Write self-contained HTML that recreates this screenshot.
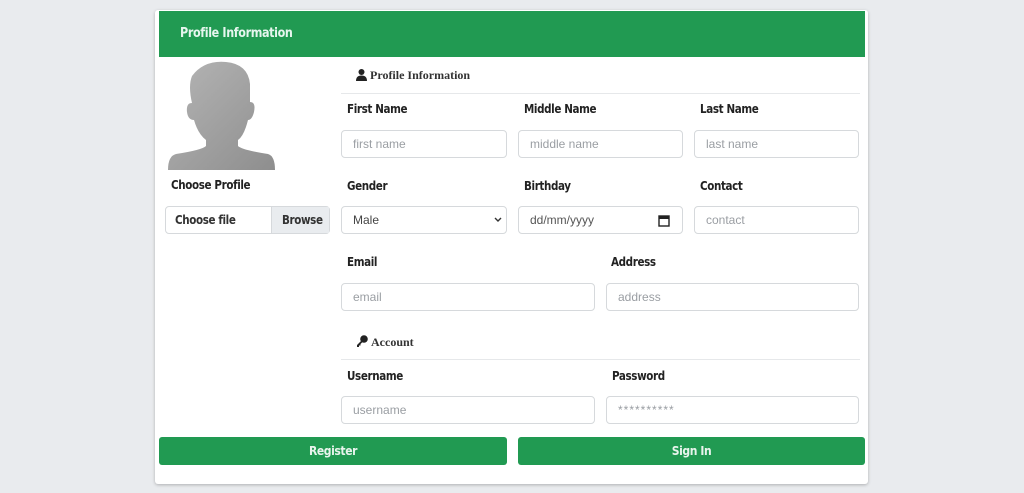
<!DOCTYPE html>
<html><head><meta charset="utf-8"><style>
*{box-sizing:border-box;margin:0;padding:0}
body{width:1024px;height:493px;background:#e9ebee;position:relative;overflow:hidden;font-family:"Liberation Sans",sans-serif}
.card{position:absolute;left:155px;top:10px;width:713px;height:474px;background:#fff;border-radius:3px;box-shadow:0 1px 3px rgba(0,0,0,.25)}
.hd{position:absolute;left:159px;top:11px;width:706px;height:46px;background:#219a52}
.b{position:absolute;font-family:"DejaVu Sans Condensed","Liberation Sans",sans-serif;font-weight:bold;font-size:12.5px;color:#222;letter-spacing:-0.4px;line-height:14px;transform-origin:0 0;transform:scaleX(.92)}
.in{position:absolute;height:28px;border:1px solid #d6d9dc;border-radius:4px;background:#fff;font-size:12px;color:#9a9ea3;padding-left:11px;line-height:26px}
.sec{position:absolute;font-family:"Liberation Serif",serif;font-weight:bold;font-size:12px;color:#333}
.line{position:absolute;height:1px;background:#e6e8ea;left:341px;width:519px}
.btn{position:absolute;top:437px;height:28px;background:#219a52;border-radius:3px;text-align:center;line-height:28px;font-family:"DejaVu Sans Condensed","Liberation Sans",sans-serif;font-weight:bold;font-size:12px;color:#e8f4ec;letter-spacing:-0.4px}
</style></head><body>
<div class="card"></div>
<div class="hd"></div>
<div class="b" style="left:180px;top:26px;color:#e6f6ee;font-size:13.5px">Profile Information</div>
<svg style="position:absolute;left:168px;top:60px" width="108" height="110" viewBox="0 0 108 110">
<defs><linearGradient id="g" x1="0" y1="0" x2="1" y2="1"><stop offset="0" stop-color="#b5b5b5"/><stop offset="1" stop-color="#8e8e8e"/></linearGradient></defs>
<path d="M24 16 Q36 0 58 2 Q80 4 82 24 L82 42 Q88 42 86 52 Q84 60 80 60 Q76 76 70 80 L70 86 Q74 90 100 94 Q107 96 107 110 L0 110 Q0 96 8 94 Q34 90 38 86 L38 80 Q30 74 26 60 Q20 60 19 52 Q18 43 24 43 Q20 26 24 16Z" fill="url(#g)"/>
</svg>
<div class="b" style="left:171px;top:178px">Choose Profile</div>
<div class="in" style="left:165px;top:206px;width:165px;padding:0"><div style="position:absolute;right:0;top:0;width:58px;height:26px;background:#e9ecef;border-left:1px solid #d6d9dc"></div><span class="b" style="left:9px;top:6px;color:#333">Choose file</span><span class="b" style="left:116px;top:6px;color:#333">Browse</span></div>
<svg style="position:absolute;left:356px;top:69px" width="11" height="12" viewBox="0 0 11 12"><circle cx="5.5" cy="3" r="3" fill="#222"/><path d="M0 12 Q0 6.5 5.5 6.5 Q11 6.5 11 12Z" fill="#222"/></svg>
<div class="sec" style="left:370px;top:68px">Profile Information</div>
<div class="line" style="top:93px"></div>
<div class="b" style="left:347px;top:102px">First Name</div>
<div class="b" style="left:524px;top:102px">Middle Name</div>
<div class="b" style="left:700px;top:102px">Last Name</div>
<div class="in" style="left:341px;top:130px;width:166px">first name</div>
<div class="in" style="left:518px;top:130px;width:165px">middle name</div>
<div class="in" style="left:694px;top:130px;width:165px">last name</div>
<div class="b" style="left:347px;top:179px">Gender</div>
<div class="b" style="left:524px;top:179px">Birthday</div>
<div class="b" style="left:700px;top:179px">Contact</div>
<div class="in" style="left:341px;top:206px;width:166px;color:#444">Male<svg style="position:absolute;right:4px;top:10px" width="8" height="6" viewBox="0 0 8 6"><path d="M1 1 L4 4 L7 1" stroke="#333" stroke-width="1.4" fill="none"/></svg></div>
<div class="in" style="left:518px;top:206px;width:165px;color:#555">dd/mm/yyyy<svg style="position:absolute;right:12px;top:7px" width="12" height="13" viewBox="0 0 12 13"><rect x="1" y="2" width="10" height="10" fill="none" stroke="#222" stroke-width="1.4"/><rect x="1" y="2" width="10" height="3" fill="#222"/></svg></div>
<div class="in" style="left:694px;top:206px;width:165px">contact</div>
<div class="b" style="left:347px;top:255px">Email</div>
<div class="b" style="left:611px;top:255px">Address</div>
<div class="in" style="left:341px;top:283px;width:254px">email</div>
<div class="in" style="left:606px;top:283px;width:253px">address</div>
<svg style="position:absolute;left:356px;top:335px" width="12" height="12" viewBox="0 0 12 12"><circle cx="8" cy="4" r="3.8" fill="#222"/><path d="M6 5 L1 10 L1 12 L3 12 L3 10.5 L4.5 10.5 L4.5 9 L7 6.5Z" fill="#222"/></svg>
<div class="sec" style="left:371px;top:335px">Account</div>
<div class="line" style="top:359px"></div>
<div class="b" style="left:347px;top:369px">Username</div>
<div class="b" style="left:612px;top:369px">Password</div>
<div class="in" style="left:341px;top:396px;width:254px">username</div>
<div class="in" style="left:606px;top:396px;width:253px;letter-spacing:1px">**********</div>
<div class="btn" style="left:159px;width:348px">Register</div>
<div class="btn" style="left:518px;width:347px">Sign In</div>
</body></html>
